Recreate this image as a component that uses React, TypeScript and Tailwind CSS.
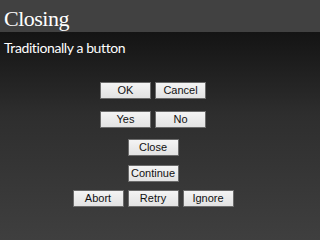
const rows: { labels: string[]; mt: string }[] = [
  { labels: ["OK", "Cancel"], mt: "mt-0" },
  { labels: ["Yes", "No"], mt: "mt-[12px]" },
  { labels: ["Close"], mt: "mt-[11px]" },
  { labels: ["Continue"], mt: "mt-[9px]" },
  { labels: ["Abort", "Retry", "Ignore"], mt: "mt-[8px]" },
];

function DialogButton({ label }: { label: string }) {
  return (
    <button
      type="button"
      className="w-[51px] h-[17px] border border-[#6b6b6b] bg-gradient-to-b from-[#f4f4f4] to-[#e2e2e2] text-[11px] leading-none text-[#111] [font-family:'Liberation_Sans',Arial,sans-serif]"
    >
      {label}
    </button>
  );
}

export default function App() {
  return (
    <div className="w-[320px] h-[240px] overflow-hidden flex flex-col bg-[#3e3e3e]">
      <div className="h-[32px] shrink-0 bg-[#414141] px-[4px] flex items-end">
        <h1 className="text-[22px] leading-[26px] tracking-[-0.5px] text-white [font-family:'Liberation_Serif',Georgia,serif]">
          Closing
        </h1>
      </div>
      <div className="flex-1 flex flex-col bg-gradient-to-b from-[#141414] via-[#2e2e2e] via-40% to-[#3f3f3f]">
        <p className="px-[4px] pt-[7px] text-[14px] leading-[18px] tracking-[-0.4px] text-white [font-family:Lato,sans-serif]">
          Traditionally a button
        </p>
        <div className="mt-[25px] ml-[-14px] flex flex-col items-center">
          {rows.map((row, i) => (
            <div key={i} className={`flex gap-[4px] ${row.mt}`}>
              {row.labels.map((label) => (
                <DialogButton key={label} label={label} />
              ))}
            </div>
          ))}
        </div>
      </div>
    </div>
  );
}
